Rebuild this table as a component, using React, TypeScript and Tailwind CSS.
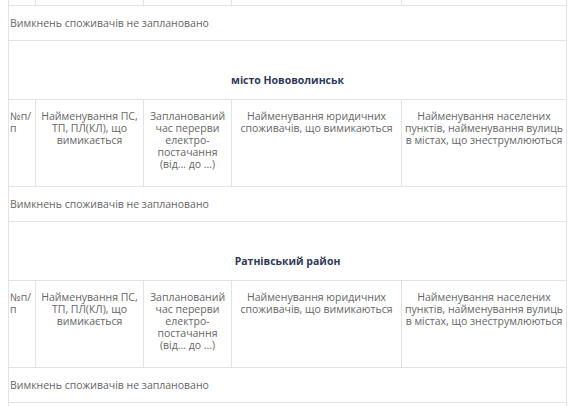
const cols = ["w-[27px]", "w-[108px]", "w-[88px]", "w-[170px]", "w-[164px]"];

function HeaderRow() {
  return (
    <div className="flex h-[87px] border-b border-[#e3e3e3]">
      <div className="w-[27px] shrink-0 border-r border-[#e3e3e3] pt-[10px] pl-[1px] text-left">№п/ п</div>
      <div className="w-[108px] shrink-0 border-r border-[#e3e3e3] pt-[10px] px-[3px] text-center">
        Найменування ПС, ТП, ПЛ(КЛ), що вимикається
      </div>
      <div className="w-[88px] shrink-0 border-r border-[#e3e3e3] pt-[10px] px-[3px] text-center">
        Запланований час перерви електро-постачання (від… до …)
      </div>
      <div className="w-[170px] shrink-0 border-r border-[#e3e3e3] pt-[10px] px-[3px] text-center">
        Найменування юридичних споживачів, що вимикаються
      </div>
      <div className="w-[164px] shrink-0 pt-[10px] px-[1px] text-center">
        Найменування населених пунктів, найменування вулиць в містах, що знеструмлюються
      </div>
    </div>
  );
}

function EmptyRow() {
  return (
    <div className="flex h-[35px] items-center border-b border-[#e3e3e3] pl-[1px]">
      Вимкнень споживачів не заплановано
    </div>
  );
}

function Heading({ title }: { title: string }) {
  return (
    <div className="h-[59px] border-b border-[#e3e3e3] pt-[33px] text-center font-bold text-[#2f3a5a]">
      {title}
    </div>
  );
}

export default function App() {
  return (
    <div className="h-[406px] w-[572px] overflow-hidden bg-white">
      <div
        className="ml-[8px] w-[559px] border-x border-[#e3e3e3] text-[10.5px] leading-[12px] text-[#666]"
        style={{ fontFamily: '"Open Sans", sans-serif' }}
      >
        <div className="flex h-[6px] border-b border-[#e3e3e3]">
          {cols.map((c, i) => (
            <div key={i} className={`${c} shrink-0 ${i < 4 ? "border-r border-[#e3e3e3]" : ""}`} />
          ))}
        </div>
        <EmptyRow />
        <Heading title="місто Нововолинськ" />
        <HeaderRow />
        <EmptyRow />
        <Heading title="Ратнівський район" />
        <HeaderRow />
        <EmptyRow />
        <div className="h-[40px]" />
      </div>
    </div>
  );
}
